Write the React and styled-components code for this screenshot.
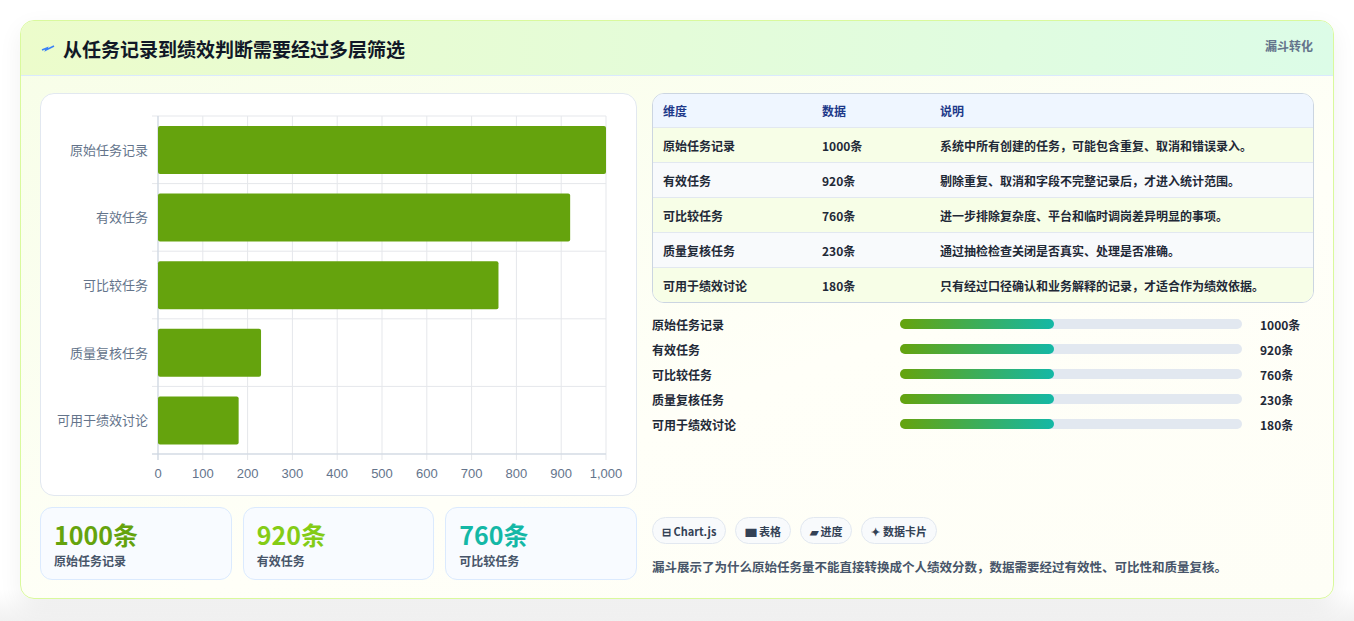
import React from "react";
import styled, { createGlobalStyle } from "styled-components";

const G = createGlobalStyle`
  body{margin:0;background:#fff;font-family:"Noto Sans CJK SC","Noto Sans",sans-serif;}
`;
const Page = styled.div`padding:20px 20px 22px 20px;height:621px;box-sizing:border-box;background:linear-gradient(#fff 95%,#f1f1f1);`;
const Card = styled.div`
  width:1314px;height:579px;box-sizing:border-box;border:1px solid #d9f99d;border-radius:14px;overflow:hidden;
  background:linear-gradient(160deg,#f7fee7,#fffff8 60%,#fefef6);box-shadow:0 8px 24px rgba(0,0,0,0.06);
  display:flex;flex-direction:column;`;
const Header = styled.div`
  height:55px;box-sizing:border-box;display:flex;justify-content:space-between;padding:0 20px 0 20px;
  background:linear-gradient(90deg,#ecfccb,#dcfce7);border-bottom:1px solid #dbeafe;`;
const Title = styled.h1`margin:0;font-size:19px;font-weight:700;color:#111827;display:flex;align-items:center;gap:8px;line-height:55px;`;
const Tag = styled.div`font-size:12px;font-weight:700;color:#64748b;padding-top:16px;`;
const Body = styled.div`flex:1;display:grid;grid-template-columns:597px 662px;gap:15px;padding:17px 19px 18px 19px;`;
const Col = styled.div`display:flex;flex-direction:column;`;
const ChartBox = styled.div`height:403px;box-sizing:border-box;border:1px solid #e2e8f0;border-radius:14px;background:#fff;`;
const Stats = styled.div`display:grid;grid-template-columns:repeat(3,1fr);gap:11px;margin-top:11px;`;
const Stat = styled.div`height:73px;box-sizing:border-box;border:1px solid #dbeafe;border-radius:12px;background:#f8fbff;padding:10px 13px;`;
const StatNum = styled.div`font-size:25px;font-weight:700;color:${p=>p.c};line-height:32px;`;
const StatLbl = styled.div`font-size:12px;font-weight:600;color:#475569;margin-top:2px;`;
const Table = styled.div`border:1px solid #cbd5e1;border-radius:12px;overflow:hidden;background:#fff;`;
const Row = styled.div`display:grid;grid-template-columns:159px 118px 1fr;padding-left:10px;align-items:center;
  height:${p=>p.h?33:35}px;font-size:12px;font-weight:${p=>p.h?700:600};color:${p=>p.h?"#1e3a8a":"#1f2937"};
  background:${p=>p.h?"#eff6ff":p.alt?"#f8fafc":"#f7fee7"};border-top:${p=>p.h?"none":"1px solid #e2e8f0"};
  box-sizing:border-box;`;
const Bars = styled.div`display:flex;flex-direction:column;gap:7px;margin-top:12px;`;
const BarRow = styled.div`display:grid;grid-template-columns:248px 342px 1fr;gap:0 9px;align-items:center;font-size:12px;font-weight:700;color:#1f2937;height:18px;`;
const Track = styled.div`height:10px;border-radius:5px;background:#e2e8f0;margin-left:-9px;width:342px;`;
const Fill = styled.div`height:100%;border-radius:5px;background:linear-gradient(90deg,#65a30d,#14b8a6);`;
const Chips = styled.div`display:flex;gap:9px;margin-top:auto;`;
const Chip = styled.div`height:27px;box-sizing:border-box;border:1px solid #e2e8f0;border-radius:14px;background:#f8fafc;padding:0 9px;
  display:flex;align-items:center;gap:3px;font-size:11px;font-weight:700;color:#334155;`;
const Note = styled.div`font-size:12.5px;font-weight:600;color:#475569;margin-top:13px;margin-bottom:4px;`;

const data=[["原始任务记录",1000,"系统中所有创建的任务，可能包含重复、取消和错误录入。"],["有效任务",920,"剔除重复、取消和字段不完整记录后，才进入统计范围。"],["可比较任务",760,"进一步排除复杂度、平台和临时调岗差异明显的事项。"],["质量复核任务",230,"通过抽检检查关闭是否真实、处理是否准确。"],["可用于绩效讨论",180,"只有经过口径确认和业务解释的记录，才适合作为绩效依据。"]];

function Chart(){
  const x0=117,x1=565,y0=22,y1=360,rh=(y1-y0)/5;
  const sx=v=>x0+(x1-x0)*v/1000;
  return <svg width="597" height="403">
    {Array.from({length:11},(_,i)=><line key={i} x1={sx(i*100)} x2={sx(i*100)} y1={y0} y2={y1+6} stroke="#e5e7eb"/>)}
    {Array.from({length:6},(_,i)=><line key={"h"+i} x1={x0-6} x2={x1} y1={y0+i*rh} y2={y0+i*rh} stroke="#e5e7eb"/>)}
    <line x1={x0-6} x2={x1} y1={y1} y2={y1} stroke="#cbd5e1"/>
    <line x1={x0} x2={x0} y1={y0} y2={y1+6} stroke="#cbd5e1"/>
    {data.map((d,i)=><g key={i}>
      <rect x={x0} y={y0+i*rh+10} width={sx(d[1])-x0} height={48} rx="2" fill="#65a30d"/>
      <text x={x0-10} y={y0+i*rh+rh/2+5} textAnchor="end" fontSize="13" fill="#64748b" fontFamily="Noto Sans CJK SC">{d[0]}</text>
    </g>)}
    {Array.from({length:11},(_,i)=><text key={"t"+i} x={sx(i*100)} y={y1+24} textAnchor="middle" fontSize="13" fill="#64748b" fontFamily="Liberation Sans">{i===10?"1,000":i*100}</text>)}
  </svg>;
}

export default function App(){
  return <Page><G/><Card>
    <Header>
      <Title><svg width="14" height="10" viewBox="0 0 14 10"><path d="M1 7 L6 5 L5 7 L13 3" stroke="#3b82f6" strokeWidth="1.6" fill="none"/></svg>从任务记录到绩效判断需要经过多层筛选</Title>
      <Tag>漏斗转化</Tag>
    </Header>
    <Body>
      <Col>
        <ChartBox><Chart/></ChartBox>
        <Stats>
          <Stat><StatNum c="#65a30d">1000条</StatNum><StatLbl>原始任务记录</StatLbl></Stat>
          <Stat><StatNum c="#84cc16">920条</StatNum><StatLbl>有效任务</StatLbl></Stat>
          <Stat><StatNum c="#14b8a6">760条</StatNum><StatLbl>可比较任务</StatLbl></Stat>
        </Stats>
      </Col>
      <Col>
        <Table>
          <Row h><span>维度</span><span>数据</span><span>说明</span></Row>
          {data.map((d,i)=><Row key={i} alt={i%2===1}><span>{d[0]}</span><span>{d[1]}条</span><span>{d[2]}</span></Row>)}
        </Table>
        <Bars>
          {data.map((d,i)=><BarRow key={i}><span>{d[0]}</span><Track><Fill style={{width:"45%"}}/></Track><span>{d[1]}条</span></BarRow>)}
        </Bars>
        <Chips>
          <Chip>⊟ Chart.js</Chip><Chip>▆ 表格</Chip><Chip>▰ 进度</Chip><Chip>✦ 数据卡片</Chip>
        </Chips>
        <Note>漏斗展示了为什么原始任务量不能直接转换成个人绩效分数，数据需要经过有效性、可比性和质量复核。</Note>
      </Col>
    </Body>
  </Card></Page>;
}
